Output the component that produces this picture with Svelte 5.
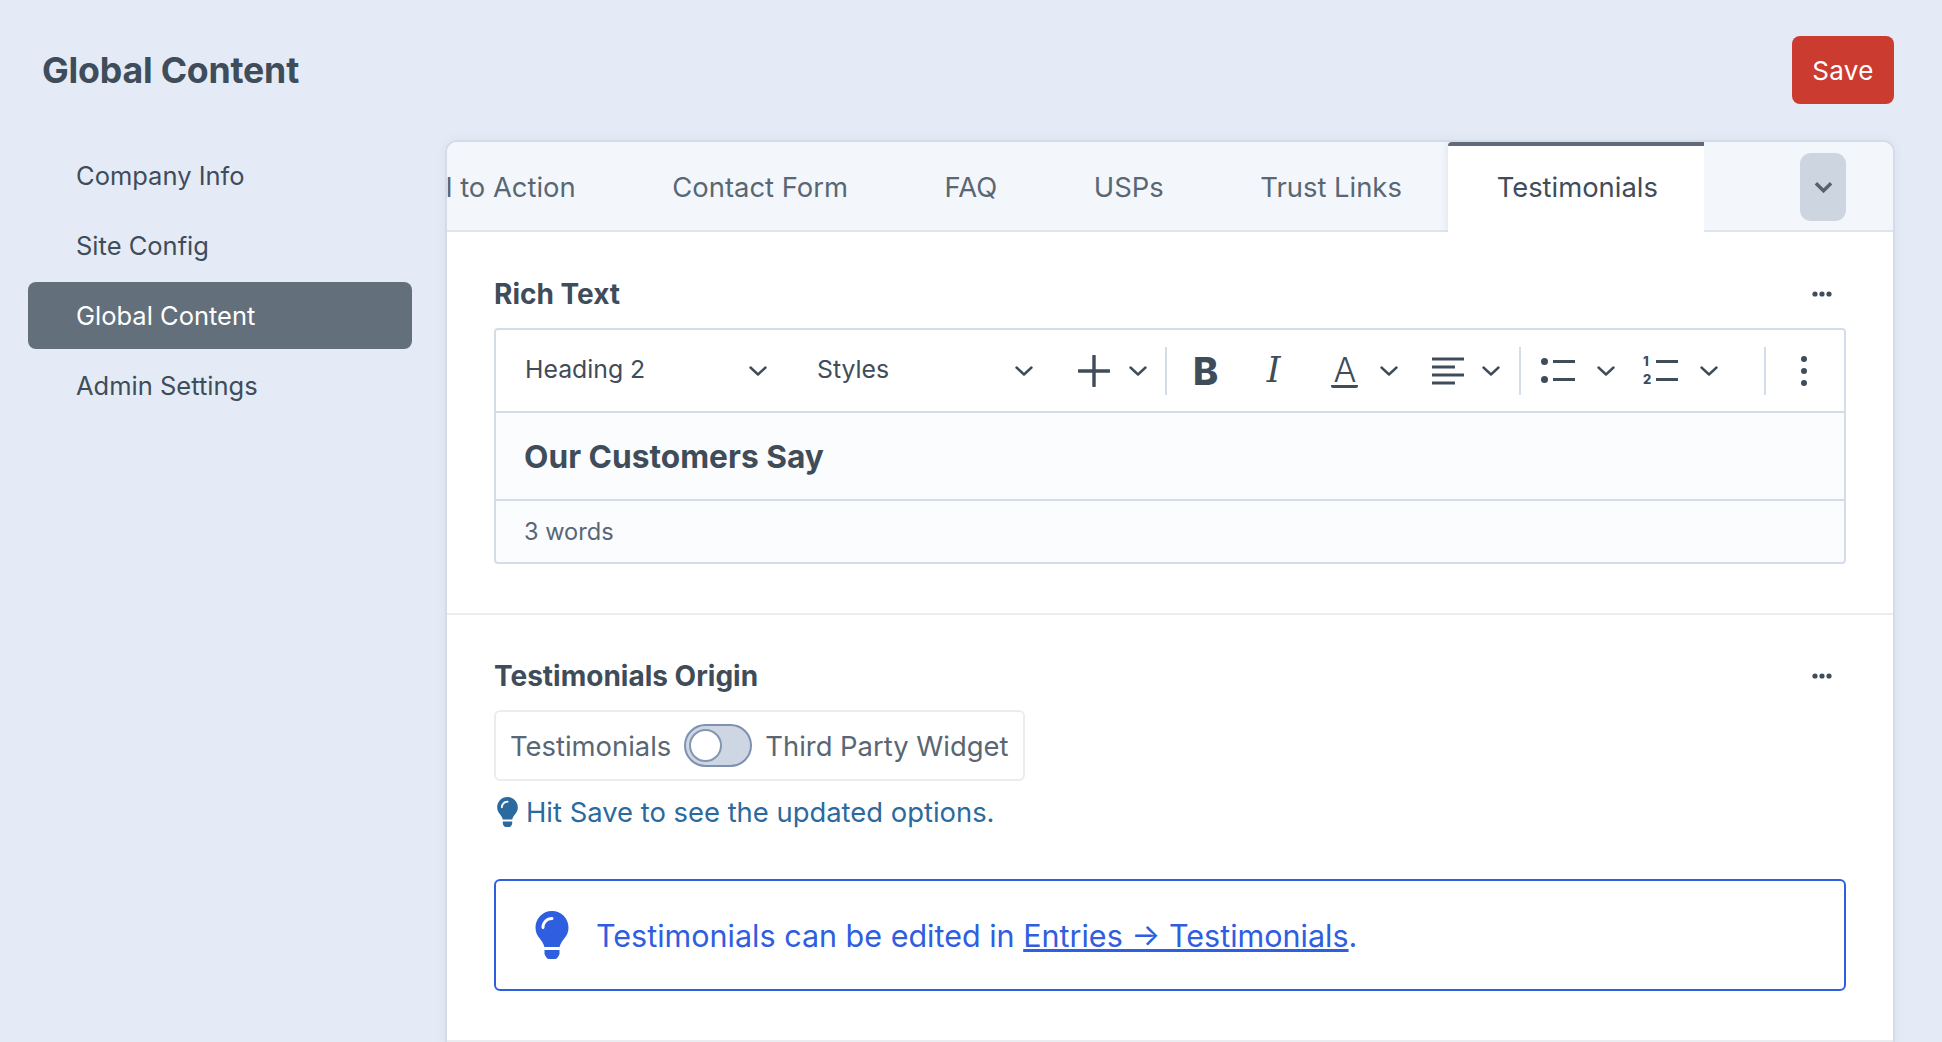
<script>
  const navItems = ["Company Info", "Site Config", "Global Content", "Admin Settings"];
  const tabs = ["Call to Action", "Contact Form", "FAQ", "USPs", "Trust Links", "Testimonials"];
  const activeNav = "Global Content";
  const activeTab = "Testimonials";
  const bulb =
    "M96.06 454.35c.01 6.29 1.87 12.45 5.36 17.69l17.09 25.69a31.99 31.99 0 0 0 26.64 14.28h61.71a31.99 31.99 0 0 0 26.64-14.28l17.09-25.69a31.989 31.989 0 0 0 5.36-17.69l.04-38.35H96.01l.05 38.35zM0 176c0 44.37 16.45 84.85 43.56 115.78 16.52 18.85 42.36 58.23 52.21 91.45.04.26.07.52.11.78h160.24c.04-.26.07-.51.11-.78 9.85-33.22 35.69-72.6 52.21-91.45C335.55 260.85 352 220.37 352 176 352 78.61 272.91-.3 175.45 0 73.44.31 0 82.97 0 176zm176-80c-44.11 0-80 35.89-80 80 0 8.84-7.16 16-16 16s-16-7.16-16-16c0-61.76 50.24-112 112-112 8.84 0 16 7.16 16 16s-7.16 16-16 16z";
</script>

{#snippet chevron()}
  <svg class="chev" viewBox="0 0 18 10" width="18" height="10"><path d="M1.5 1.5 9 8.5l7.5-7" fill="none" stroke="currentColor" stroke-width="2.4" stroke-linecap="round" stroke-linejoin="round" /></svg>
{/snippet}

{#snippet dots()}
  <svg class="dots" viewBox="0 0 20 6" width="20" height="6"><circle cx="3" cy="3" r="2.6" /><circle cx="10" cy="3" r="2.6" /><circle cx="17" cy="3" r="2.6" /></svg>
{/snippet}

<div class="page">
  <header class="top">
    <h1>Global Content</h1>
    <button class="save">Save</button>
  </header>

  <div class="body">
    <nav class="side">
      {#each navItems as item}
        <div class="nav-item" class:active={item === activeNav}>{item}</div>
      {/each}
    </nav>

    <main class="card">
      <div class="tabbar">
        <div class="tabs-clip">
          <div class="tabs">
            {#each tabs as tab}
              <div class="tab" class:active={tab === activeTab}>{tab}</div>
            {/each}
          </div>
        </div>
        <button class="more">
          <svg viewBox="0 0 20 12" width="19" height="12"><path d="M2 2l8 8 8-8" fill="none" stroke="#56626f" stroke-width="3.6" /></svg>
        </button>
      </div>

      <section class="field">
        <div class="label-row">
          <span class="label">Rich Text</span>
          {@render dots()}
        </div>
        <div class="editor">
          <div class="toolbar">
            <div class="select sel-heading"><span>Heading 2</span>{@render chevron()}</div>
            <div class="select sel-styles"><span>Styles</span>{@render chevron()}</div>
            <svg class="plus" viewBox="0 0 32 32" width="32" height="32"><path d="M16 1v30M1 16h30" stroke="currentColor" stroke-width="3.4" stroke-linecap="round" /></svg>
            <span class="gap-chev">{@render chevron()}</span>
            <i class="sep s1"></i>
            <span class="glyph bold">B</span>
            <span class="glyph ital">I</span>
            <span class="glyph under">A</span>
            <span class="chev-a">{@render chevron()}</span>
            <svg class="align" viewBox="0 0 32 28" width="32" height="28"><path d="M0 2h32M0 10h23M0 18h32M0 26h23" stroke="currentColor" stroke-width="2.8" /></svg>
            <span class="chev-b">{@render chevron()}</span>
            <i class="sep s2"></i>
            <span class="list bullets">
              <span class="row"><b class="dot"></b><b class="line"></b></span>
              <span class="row"><b class="dot"></b><b class="line"></b></span>
            </span>
            <span class="chev-c">{@render chevron()}</span>
            <span class="list numbers">
              <span class="row"><em>1</em><b class="line"></b></span>
              <span class="row"><em>2</em><b class="line"></b></span>
            </span>
            <span class="chev-d">{@render chevron()}</span>
            <i class="sep s3"></i>
            <svg class="kebab" viewBox="0 0 6 32" width="6" height="32"><circle cx="3" cy="4" r="3" /><circle cx="3" cy="16" r="3" /><circle cx="3" cy="28" r="3" /></svg>
          </div>
          <div class="content"><h2>Our Customers Say</h2></div>
          <div class="status">3 words</div>
        </div>
      </section>

      <section class="field second">
        <div class="label-row">
          <span class="label">Testimonials Origin</span>
          {@render dots()}
        </div>
        <div class="switch-box">
          <span>Testimonials</span>
          <span class="toggle"><span class="knob"></span></span>
          <span>Third Party Widget</span>
        </div>
        <p class="hint">
          <svg viewBox="0 0 352 512" width="21" height="30"><path d={bulb} fill="currentColor" /></svg>
          Hit Save to see the updated options.
        </p>
        <div class="notice">
          <svg viewBox="0 0 352 512" width="34" height="48"><path d={bulb} fill="currentColor" /></svg>
          <span>Testimonials can be edited in <a href="#entries">Entries → Testimonials</a>.</span>
        </div>
      </section>
    </main>
  </div>
</div>

<style>
  :global(body) {
    margin: 0;
    background: #e4ebf6;
    overflow: hidden;
  }

  .page {
    height: 1042px;
    overflow: hidden;
    font-family: Inter, "Noto Sans", sans-serif;
    font-size: 27.4px;
    color: #3f4c5a;
  }

  .top {
    display: flex;
    justify-content: space-between;
    align-items: center;
    height: 68px;
    padding: 36px 48px 36px 42px;
  }

  h1 {
    margin: 0;
    font-size: 35.7px;
    font-weight: 700;
    letter-spacing: -0.2px;
  }

  .save {
    width: 102px;
    height: 68px;
    border: 0;
    border-radius: 8px;
    background: #cc3b30;
    color: #fff;
    font: inherit;
    font-size: 26px;
    letter-spacing: 0.3px;
  }

  .body {
    display: flex;
    align-items: flex-start;
  }

  .side {
    width: 384px;
    margin: 2px 33px 0 28px;
    font-size: 25.5px;
  }

  .nav-item {
    height: 67px;
    margin-bottom: 3px;
    padding-left: 48px;
    border-radius: 8px;
    line-height: 67px;
  }

  .nav-item.active {
    background: #646f7c;
    color: #fff;
  }

  .card {
    width: 1450px;
    height: 1002px;
    box-sizing: border-box;
    border: 2px solid #d3dce8;
    border-bottom: 0;
    border-radius: 12px 12px 0 0;
    background: #fff;
    box-shadow: 0 0 10px rgba(160, 175, 195, 0.15);
  }

  .tabbar {
    display: flex;
    height: 88px;
    border-bottom: 2px solid #dfe5ec;
    border-radius: 10px 10px 0 0;
    background: #f3f7fc;
  }

  .tabs-clip {
    flex: 1;
    min-width: 0;
    height: 90px;
    overflow: hidden;
  }

  .tabs {
    display: flex;
    width: max-content;
    margin-left: -91.5px;
  }

  .tab {
    height: 88px;
    padding: 0 48.3px;
    color: #596673;
    line-height: 90px;
  }

  .tab.active {
    box-sizing: border-box;
    height: 90px;
    margin-left: -2px;
    padding: 0 52px 0 48.5px;
    border-top: 4px solid #5f6b78;
    border-radius: 4px 4px 0 0;
    background: #fff;
    color: #3f4c5a;
    line-height: 82px;
    box-shadow: 0 0 8px rgba(140, 155, 175, 0.25);
  }

  .more {
    flex: none;
    display: flex;
    align-items: center;
    justify-content: center;
    width: 46px;
    height: 68px;
    margin: 11px 47px 0 96px;
    padding: 0;
    border: 0;
    border-radius: 11px;
    background: #cdd5e0;
  }

  .field {
    padding: 47px 47px 49px;
    border-bottom: 2px solid #eaedf0;
  }

  .second {
    padding-top: 46px;
  }

  .label-row {
    display: flex;
    justify-content: space-between;
    align-items: center;
    height: 30px;
  }

  .label {
    font-size: 28px;
    font-weight: 700;
  }

  .dots {
    fill: #3f4c5a;
    margin-right: 14px;
  }

  .editor {
    box-sizing: border-box;
    height: 236px;
    margin-top: 19px;
    border: 2px solid #d3dce8;
    border-radius: 4px;
    background: #fbfcfe;
  }

  .toolbar {
    display: flex;
    align-items: center;
    height: 81px;
    padding-left: 29px;
    border-bottom: 2px solid #d3dce8;
    border-radius: 3px 3px 0 0;
    background: #fff;
    font-size: 24.8px;
  }

  .chev {
    display: block;
    color: #3f4c5a;
  }

  .select {
    display: flex;
    align-items: center;
    justify-content: space-between;
    box-sizing: border-box;
  }

  .select span {
    margin-bottom: 4px;
  }

  .sel-heading {
    width: 292px;
    padding-right: 50px;
  }

  .sel-styles {
    width: 261px;
    padding-right: 45px;
  }

  .plus {
    flex: none;
  }

  .gap-chev {
    margin-left: 19px;
  }

  .sep {
    flex: none;
    width: 2px;
    height: 48px;
    background: #d3dce8;
  }

  .s1 {
    margin-left: 18px;
  }

  .glyph {
    flex: none;
    line-height: 1;
  }

  .bold {
    width: 26px;
    margin-left: 26px;
    font-size: 38px;
    font-weight: 800;
  }

  .ital {
    width: 22px;
    margin-left: 47.7px;
    font-family: "DejaVu Serif", serif;
    font-size: 35px;
    font-style: italic;
  }

  .under {
    box-sizing: border-box;
    width: 27px;
    margin-left: 42.8px;
    border-bottom: 3.5px solid currentColor;
    border-radius: 2px;
    font-size: 34px;
    font-weight: 300;
    line-height: 31px;
    text-align: center;
  }

  .chev-a {
    margin-left: 21.5px;
  }

  .align {
    flex: none;
    margin-left: 34px;
  }

  .chev-b {
    margin-left: 18px;
  }

  .s2 {
    margin-left: 19px;
  }

  .list {
    flex: none;
    display: flex;
    flex-direction: column;
    gap: 9px;
  }

  .row {
    display: flex;
    align-items: center;
    height: 9px;
  }

  .bullets {
    width: 34px;
    margin-left: 20px;
    color: #3f4c5a;
  }

  .dot {
    width: 7px;
    height: 7px;
    border-radius: 50%;
    background: #3f4c5a;
  }

  .line {
    width: 22px;
    height: 2.8px;
    margin-left: auto;
    background: #3f4c5a;
  }

  .chev-c {
    margin-left: 22px;
  }

  .numbers {
    width: 35px;
    margin-left: 28px;
  }

  .numbers em {
    font-size: 13px;
    font-style: normal;
    font-weight: 800;
    line-height: 9px;
  }

  .chev-d {
    margin-left: 22px;
  }

  .s3 {
    margin-left: 46px;
  }

  .kebab {
    flex: none;
    margin-left: 35px;
    fill: #3f4c5a;
  }

  .content {
    height: 86px;
    padding-left: 28px;
    border-bottom: 2px solid #d3dce8;
  }

  h2 {
    margin: 0;
    font-size: 31.7px;
    font-weight: 700;
    line-height: 88px;
  }

  .status {
    padding-left: 28px;
    color: #596673;
    font-size: 23.6px;
    line-height: 62px;
  }

  .switch-box {
    display: flex;
    align-items: center;
    gap: 13px;
    box-sizing: border-box;
    width: 531px;
    height: 71px;
    margin-top: 19px;
    padding-left: 14px;
    border: 2px solid #eaedf0;
    border-radius: 6px;
    color: #596673;
    white-space: nowrap;
  }

  .toggle {
    position: relative;
    flex: none;
    box-sizing: border-box;
    width: 68px;
    height: 43px;
    border: 2px solid #7d91b0;
    border-radius: 22px;
    background: #cdd6e2;
  }

  .knob {
    position: absolute;
    top: 3px;
    left: 3px;
    box-sizing: border-box;
    width: 33px;
    height: 33px;
    border: 2px solid #8396b1;
    border-radius: 50%;
    background: #fff;
  }

  .hint {
    display: flex;
    align-items: center;
    gap: 8px;
    margin: 16px 0 0 3px;
    color: #2a6a9e;
    line-height: 30px;
  }

  .notice {
    display: flex;
    align-items: center;
    gap: 27px;
    box-sizing: border-box;
    height: 112px;
    margin-top: 52px;
    padding-left: 39px;
    border: 2px solid #2f5ee0;
    border-radius: 6px;
    color: #2f5ee0;
    font-size: 30.5px;
  }

  .notice a {
    color: inherit;
  }
</style>
